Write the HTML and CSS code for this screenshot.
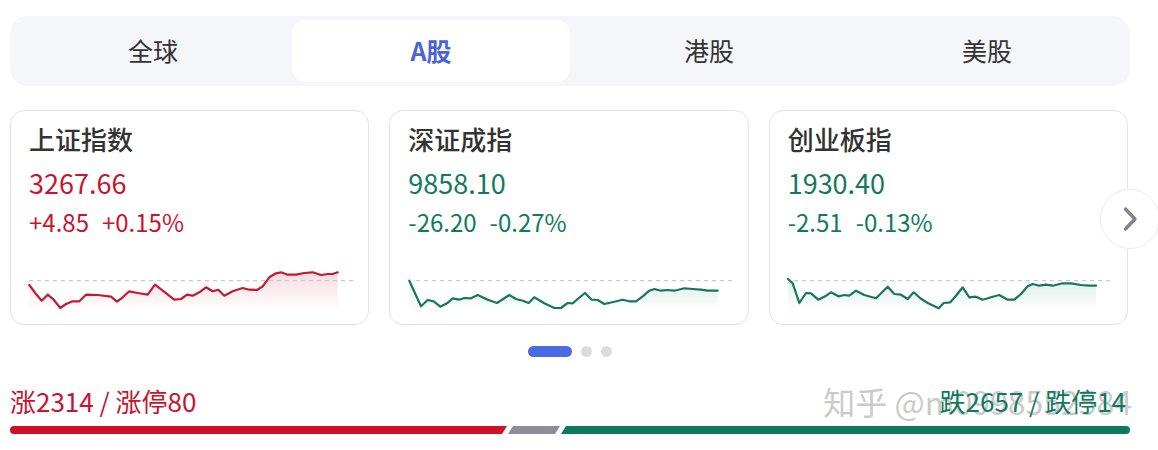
FILE: index.html
```html
<!DOCTYPE html>
<html lang="zh-CN">
<head>
<meta charset="utf-8">
<title>行情</title>
<link rel="stylesheet" href="styles.css">
</head>
<body>
<div class="page">
  <div class="tabs">
    <div class="tab">全球</div>
    <div class="tab active">A股</div>
    <div class="tab">港股</div>
    <div class="tab">美股</div>
  </div>

  <div class="cards-wrap">
    <div class="cards">
      <div class="card up">
        <div class="name">上证指数</div>
        <div class="price">3267.66</div>
        <div class="change"><span>+4.85</span><span>+0.15%</span></div>
        <svg class="chart" viewBox="0 0 324 44" preserveAspectRatio="none">
          <defs>
            <linearGradient id="gUp" x1="0" y1="0" x2="0" y2="1">
              <stop offset="0" stop-color="#d0243a" stop-opacity="0.16"/>
              <stop offset="1" stop-color="#d0243a" stop-opacity="0"/>
            </linearGradient>
          </defs>
          <polygon class="area" fill="url(#gUp)" points="0.3,18 7,27 12.7,33.7 18.7,27.7 24.7,32.7 31.3,41 37,37 43.7,34.3 50.3,34.3 57,27.7 68.7,28 82,29.7 88,34.7 93.7,30.3 100.3,24.3 108.7,26 118.7,27.7 126,17.7 133.7,23.7 145.3,32.7 152,32 158,27.7 163.7,28.7 170.3,25.3 177,20.3 183.7,24.3 189.3,22.7 195.3,28.7 203.7,24.3 213.7,21 220.3,22.7 228,23 233.7,19.3 240.3,10.3 247,6.3 252,5.3 258.7,7.7 267,7.7 275.3,6 283.7,5.3 292,8 298.7,7 303.7,7 308.7,5.3 308.7,44 0.3,44"/>
          <line class="base" x1="0" y1="13.7" x2="324" y2="13.7"/>
          <polyline class="line" points="0.3,18 7,27 12.7,33.7 18.7,27.7 24.7,32.7 31.3,41 37,37 43.7,34.3 50.3,34.3 57,27.7 68.7,28 82,29.7 88,34.7 93.7,30.3 100.3,24.3 108.7,26 118.7,27.7 126,17.7 133.7,23.7 145.3,32.7 152,32 158,27.7 163.7,28.7 170.3,25.3 177,20.3 183.7,24.3 189.3,22.7 195.3,28.7 203.7,24.3 213.7,21 220.3,22.7 228,23 233.7,19.3 240.3,10.3 247,6.3 252,5.3 258.7,7.7 267,7.7 275.3,6 283.7,5.3 292,8 298.7,7 303.7,7 308.7,5.3"/>
        </svg>
      </div>

      <div class="card down">
        <div class="name">深证成指</div>
        <div class="price">9858.10</div>
        <div class="change"><span>-26.20</span><span>-0.27%</span></div>
        <svg class="chart" viewBox="0 0 324 44" preserveAspectRatio="none">
          <defs>
            <linearGradient id="gDown1" x1="0" y1="0" x2="0" y2="1">
              <stop offset="0" stop-color="#1a8a66" stop-opacity="0.14"/>
              <stop offset="1" stop-color="#1a8a66" stop-opacity="0"/>
            </linearGradient>
          </defs>
          <polygon class="area" fill="url(#gDown1)" points="1.3,13.7 13,39.3 19.7,33 25.7,34.3 32.3,39.7 39,36.3 44.7,31.3 51.3,32.7 56.3,31 63,31.3 69.7,28 79.7,32.7 89,36 101.3,28 108,32 114.7,33.7 120.7,36 126.3,30.3 136.3,36.3 146.3,41 153,41 159.7,36 164.7,36.3 169.7,32 177,26 183.7,32.7 189.7,33 196.3,37 206.3,34.7 214.7,32.7 221.3,34.3 228,34.3 234.7,29.3 241.3,23.7 246.3,22 253,23.7 259.7,23 266.3,23.7 276.3,21.3 284.7,22 293,22.7 299.7,23.7 309.7,23.7 309.7,44 1.3,44"/>
          <line class="base" x1="8" y1="13.7" x2="324" y2="13.7"/>
          <polyline class="line" points="1.3,13.7 13,39.3 19.7,33 25.7,34.3 32.3,39.7 39,36.3 44.7,31.3 51.3,32.7 56.3,31 63,31.3 69.7,28 79.7,32.7 89,36 101.3,28 108,32 114.7,33.7 120.7,36 126.3,30.3 136.3,36.3 146.3,41 153,41 159.7,36 164.7,36.3 169.7,32 177,26 183.7,32.7 189.7,33 196.3,37 206.3,34.7 214.7,32.7 221.3,34.3 228,34.3 234.7,29.3 241.3,23.7 246.3,22 253,23.7 259.7,23 266.3,23.7 276.3,21.3 284.7,22 293,22.7 299.7,23.7 309.7,23.7"/>
        </svg>
      </div>

      <div class="card down">
        <div class="name">创业板指</div>
        <div class="price">1930.40</div>
        <div class="change"><span>-2.51</span><span>-0.13%</span></div>
        <svg class="chart" viewBox="0 0 324 44" preserveAspectRatio="none">
          <defs>
            <linearGradient id="gDown2" x1="0" y1="0" x2="0" y2="1">
              <stop offset="0" stop-color="#1a8a66" stop-opacity="0.14"/>
              <stop offset="1" stop-color="#1a8a66" stop-opacity="0"/>
            </linearGradient>
          </defs>
          <polygon class="area" fill="url(#gDown2)" points="0,12 4.7,16.3 11.3,36 18,26 23,26.3 30.3,32.7 37,29.3 43,25.3 50.3,29.3 56.3,28 61.3,28.7 68,23.7 76.3,28 88,31.3 99.7,19.7 106.3,27 113,27.7 119.7,32 125.7,25.3 132.3,31.3 139.7,36 150.7,41.3 155.7,36 162.3,35.3 168,28.7 174.7,20.3 181.3,30.3 188,29.7 194.7,32.7 203,30.3 211.3,28 219.7,32.7 226.3,32.7 233,27 239.7,19.3 244.7,17 251.3,18.7 258,17.7 264.7,18.7 274.7,16.3 283,16.3 293,18 301.3,18.7 308,18.7 308,44 0,44"/>
          <line class="base" x1="6" y1="13.7" x2="324" y2="13.7"/>
          <polyline class="line" points="0,12 4.7,16.3 11.3,36 18,26 23,26.3 30.3,32.7 37,29.3 43,25.3 50.3,29.3 56.3,28 61.3,28.7 68,23.7 76.3,28 88,31.3 99.7,19.7 106.3,27 113,27.7 119.7,32 125.7,25.3 132.3,31.3 139.7,36 150.7,41.3 155.7,36 162.3,35.3 168,28.7 174.7,20.3 181.3,30.3 188,29.7 194.7,32.7 203,30.3 211.3,28 219.7,32.7 226.3,32.7 233,27 239.7,19.3 244.7,17 251.3,18.7 258,17.7 264.7,18.7 274.7,16.3 283,16.3 293,18 301.3,18.7 308,18.7"/>
        </svg>
      </div>
    </div>
    <div class="next">
      <svg viewBox="0 0 30 30" width="30" height="30"><path d="M10.5 5 L20 15 L10.5 25" fill="none" stroke="#85838f" stroke-width="3.4" stroke-linecap="round" stroke-linejoin="round"/></svg>
    </div>
  </div>

  <div class="dots">
    <span class="dot current"></span>
    <span class="dot"></span>
    <span class="dot"></span>
  </div>

  <div class="stats">
    <div class="watermark">知乎 @m0998552584</div>
    <div class="rise">涨2314 / 涨停80</div>
    <div class="fall">跌2657 / 跌停14</div>
  </div>

  <div class="bar">
    <div class="seg seg-up" style="width:497px"></div>
    <div class="seg seg-flat" style="width:52px"></div>
    <div class="seg seg-down"></div>
  </div>
</div>
</body>
</html>
```

FILE: styles.css
```css
* { box-sizing: border-box; }

html, body {
  margin: 0;
  padding: 0;
  background: #ffffff;
}

body {
  font-family: "Noto Sans CJK SC", "Noto Sans", sans-serif;
  color: #333333;
}

.page {
  width: 1120px;
  margin-left: 10px;
  padding-top: 16px;
}

/* tabs */
.tabs {
  display: grid;
  grid-template-columns: repeat(4, 1fr);
  height: 70px;
  padding: 4px;
  background: #f5f6f9;
  border-radius: 18px;
}

.tab {
  display: flex;
  align-items: center;
  justify-content: center;
  padding-bottom: 3px;
  font-size: 25px;
  color: #333333;
  border-radius: 14px;
}

.tab.active {
  background: #ffffff;
  color: #4a63d8;
  font-weight: 700;
}

/* cards */
.cards-wrap {
  position: relative;
  margin-top: 24px;
}

.cards {
  display: grid;
  grid-template-columns: repeat(3, 1fr);
  gap: 20px;
  width: 1118px;
}

.card {
  display: flex;
  flex-direction: column;
  height: 215px;
  padding: 9px 0 13px 18px;
  border: 1px solid #e3e3e6;
  border-radius: 14px;
  background: #ffffff;
}

.name {
  font-size: 26px;
  font-weight: 500;
  line-height: 38px;
  color: #333333;
}

.price {
  margin-top: 7px;
  font-size: 27px;
  line-height: 36px;
}

.change {
  display: flex;
  gap: 13px;
  margin-top: 4px;
  font-size: 24px;
  line-height: 34px;
}

.up .price, .up .change { color: #c8142f; }
.down .price, .down .change { color: #117a5d; }

.chart {
  display: block;
  width: 324px;
  height: 44px;
  margin-top: auto;
  overflow: visible;
}

.chart .base {
  stroke: #c9cad0;
  stroke-width: 1.3;
  stroke-dasharray: 4 4;
}

.chart .line {
  fill: none;
  stroke-width: 2.2;
  stroke-linejoin: round;
  stroke-linecap: round;
}

.up .chart .line { stroke: #c41a30; }
.down .chart .line { stroke: #16775a; }

.next {
  position: absolute;
  top: 79px;
  right: -30px;
  width: 60px;
  height: 60px;
  display: flex;
  align-items: center;
  justify-content: center;
  background: #ffffff;
  border: 1px solid #ececef;
  border-radius: 50%;
}

/* dots */
.dots {
  display: flex;
  justify-content: center;
  align-items: center;
  gap: 9px;
  margin-top: 21px;
  height: 11px;
}

.dot {
  width: 11px;
  height: 11px;
  border-radius: 50%;
  background: #dcdcdf;
}

.dot.current {
  width: 44px;
  border-radius: 6px;
  background: #4a6ae6;
}

/* stats */
.stats {
  position: relative;
  display: flex;
  justify-content: space-between;
  align-items: center;
  margin-top: 26px;
  height: 34px;
  font-size: 26px;
}

.rise { color: #c8142f; }
.fall { position: relative; color: #117a5d; padding-right: 4px; }

.watermark {
  position: absolute;
  right: -2px;
  top: -5px;
  font-size: 32px;
  color: rgba(185, 185, 185, 0.75);
  text-shadow: 1px 1px 0 rgba(255,255,255,0.9), -1px -1px 0 rgba(255,255,255,0.6);
  white-space: nowrap;
  pointer-events: none;
}

/* bar */
.bar {
  display: flex;
  gap: 3px;
  margin-top: 9px;
  height: 8px;
}

.seg { height: 8px; }

.seg-up {
  background: #cf1128;
  border-radius: 4px 0 0 4px;
  clip-path: polygon(0 0, 100% 0, calc(100% - 5px) 100%, 0 100%);
}

.seg-flat {
  margin-left: -2px;
  background: #8d8f98;
  clip-path: polygon(5px 0, 100% 0, calc(100% - 5px) 100%, 0 100%);
}

.seg-down {
  flex: 1;
  margin-left: -2px;
  background: #0d7a5e;
  border-radius: 0 4px 4px 0;
  clip-path: polygon(5px 0, 100% 0, 100% 100%, 0 100%);
}
```
